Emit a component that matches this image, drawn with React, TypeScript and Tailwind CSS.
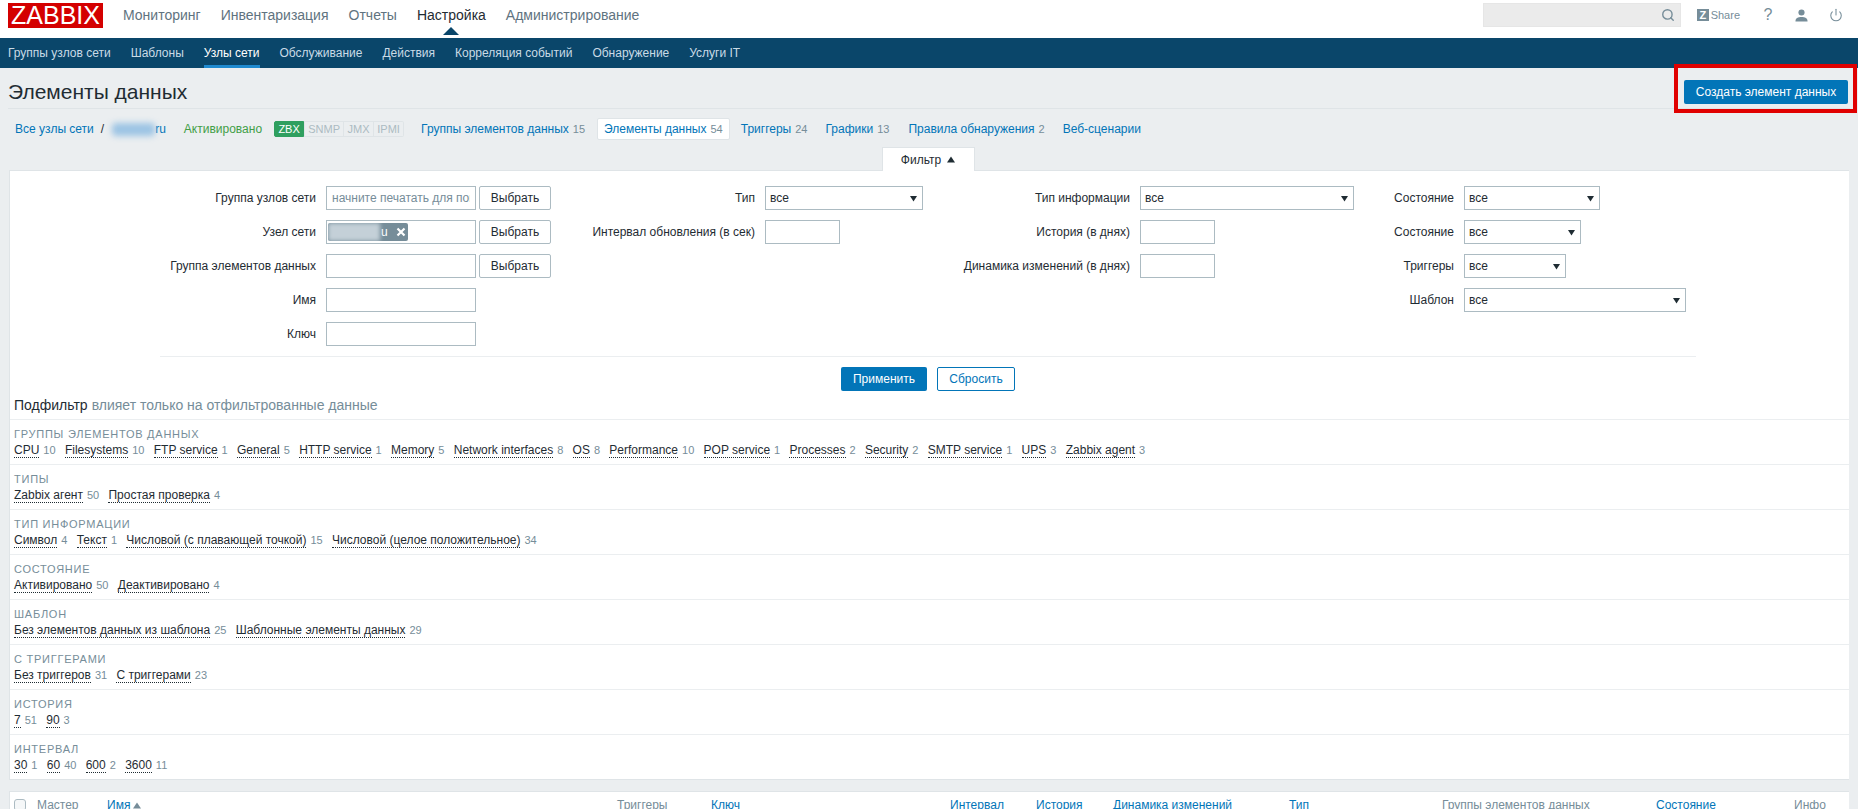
import React from "react";
import { Search, Power } from "lucide-react";

const sub: [string, [string, number][]][] = [
  ["Группы элементов данных", [["CPU", 10], ["Filesystems", 10], ["FTP service", 1], ["General", 5], ["HTTP service", 1], ["Memory", 5], ["Network interfaces", 8], ["OS", 8], ["Performance", 10], ["POP service", 1], ["Processes", 2], ["Security", 2], ["SMTP service", 1], ["UPS", 3], ["Zabbix agent", 3]]],
  ["Типы", [["Zabbix агент", 50], ["Простая проверка", 4]]],
  ["Тип информации", [["Символ", 4], ["Текст", 1], ["Числовой (с плавающей точкой)", 15], ["Числовой (целое положительное)", 34]]],
  ["Состояние", [["Активировано", 50], ["Деактивировано", 4]]],
  ["Шаблон", [["Без элементов данных из шаблона", 25], ["Шаблонные элементы данных", 29]]],
  ["С триггерами", [["Без триггеров", 31], ["С триггерами", 23]]],
  ["История", [["7", 51], ["90", 3]]],
  ["Интервал", [["30", 1], ["60", 40], ["600", 2], ["3600", 11]]],
];

function Arrow() {
  return (
    <svg width="7" height="7" viewBox="0 0 7 7" className="shrink-0">
      <path d="M0 1h7L3.5 6.5z" fill="#1f2c33" />
    </svg>
  );
}

function Select({ w }: { w: string }) {
  return (
    <div className={`${w} h-6 border border-[#acbbc2] bg-white flex items-center justify-between pl-[4px] pr-[5px] text-[#1f2c33]`}>
      <span>все</span>
      <Arrow />
    </div>
  );
}

function Input({ w, placeholder }: { w: string; placeholder?: string }) {
  return (
    <input
      readOnly
      placeholder={placeholder}
      className={`${w} h-6 border border-[#acbbc2] bg-white px-[5px] outline-none placeholder:text-[#768d99] text-xs`}
    />
  );
}

function Pick() {
  return (
    <button className="w-[72px] h-6 ml-[3px] border border-[#acbbc2] rounded-[2px] bg-white text-[#1f2c33] text-xs">Выбрать</button>
  );
}

function Row({ label, w, children }: { label?: string; w: string; children?: React.ReactNode }) {
  return (
    <div className="flex items-center h-6">
      <div className={`${w} shrink-0 text-right pr-[10px] text-[#1f2c33] whitespace-nowrap`}>{label}</div>
      {children}
    </div>
  );
}

function Tab({ text, n, active, className }: { text: string; n?: number; active?: boolean; className?: string }) {
  return (
    <div className={`h-[22px] flex items-center whitespace-nowrap px-[6px] rounded-[2px] ${active ? "bg-white border border-[#dfe4e7]" : ""} ${className ?? ""}`}>
      <span className="text-[#0275b8]">{text}</span>
      {n !== undefined && <span className="text-[#768d99] ml-[4px] text-[11px]">{n}</span>}
    </div>
  );
}

export default function App() {
  return (
    <div className="w-[1858px] h-[809px] overflow-hidden bg-[#ebeef0] text-xs font-['Liberation_Sans',Arial,sans-serif] relative">
      {/* top nav */}
      <div className="h-[38px] bg-white flex items-start pl-2 relative">
        <div className="mt-[3px] w-[95px] h-[25px] bg-[#d40000] text-white text-[25px] leading-[25px] text-center">ZABBIX</div>
        <nav className="flex gap-5 ml-5 h-[30px] items-center text-sm text-[#5f7380] whitespace-nowrap">
          <span>Мониторинг</span>
          <span>Инвентаризация</span>
          <span>Отчеты</span>
          <span className="text-[#1f2c33] relative">
            Настройка
            <span className="absolute left-1/2 -translate-x-1/2 top-[22px] w-0 h-0 border-x-[8px] border-x-transparent border-b-[8px] border-b-[#0a466a]" />
          </span>
          <span>Администрирование</span>
        </nav>
        <div className="ml-auto flex items-center h-[30px] text-[#768d99]">
          <div className="w-[198px] h-6 bg-[#ebebeb] border border-[#e6e6e6] flex items-center justify-end pr-[5px]">
            <Search size={14} strokeWidth={2.4} className="text-[#768d99]" />
          </div>
          <div className="flex items-center ml-4 w-[43px] text-[11px]">
            <span className="w-3 h-3 bg-[#768d99] text-white text-[11px] leading-3 font-bold text-center mr-[2px]">Z</span>
            Share
          </div>
          <span className="ml-[23px] w-[10px] text-[16px] text-center">?</span>
          <svg width="13" height="13" viewBox="0 0 14 14" className="ml-[22px]">
            <circle cx="7" cy="3.8" r="3.3" fill="#768d99" />
            <path d="M0.5 13.5c0-3.6 2.6-4.8 6.5-4.8s6.5 1.2 6.5 4.8z" fill="#768d99" />
          </svg>
          <Power size={14} strokeWidth={1.8} className="ml-[21px] mr-[15px]" />
        </div>
      </div>

      {/* sub nav */}
      <div className="h-[30px] bg-[#0a466a] flex gap-5 pl-2 items-stretch text-[#c9dbe6] whitespace-nowrap">
        <span className="flex items-center">Группы узлов сети</span>
        <span className="flex items-center">Шаблоны</span>
        <span className="flex items-center text-white border-b-[3px] border-[#1f8ad0] pt-[3px]">Узлы сети</span>
        <span className="flex items-center">Обслуживание</span>
        <span className="flex items-center">Действия</span>
        <span className="flex items-center">Корреляция событий</span>
        <span className="flex items-center">Обнаружение</span>
        <span className="flex items-center">Услуги IT</span>
      </div>

      {/* header */}
      <div className="mx-2 h-[41px] border-b border-[#dfe4e7] flex items-center justify-between">
        <h1 className="text-[21px] leading-6 text-[#1f2c33] mt-[7px]">Элементы данных</h1>
        <button className="w-[164px] h-6 mt-[8px] mr-[2px] bg-[#0275b8] rounded-[2px] text-white text-xs">Создать элемент данных</button>
      </div>

      {/* tabs */}
      <div className="flex items-center h-[22px] mt-[9px] pl-[9px] whitespace-nowrap">
        <Tab text="Все узлы сети" />
        <span className="text-[#1f2c33] ml-[1px]">/</span>
        <div className="ml-[8px] w-[43px] h-[13px] rounded-[4px] bg-[#9cc4e4] blur-[3px]" />
        <span className="text-[#0275b8] mr-[12px]">ru</span>
        <span className="text-[#429e47] mr-[11px] ml-[6px]">Активировано</span>
        <div className="flex h-4 text-[11px] leading-[14px] text-[#acbbc2] ml-[1px]">
          <span className="w-[30px] bg-[#2f9f5f] border border-[#2f9f5f] rounded-l-[2px] text-white text-center">ZBX</span>
          <span className="w-[40px] border border-[#dfe4e7] text-center">SNMP</span>
          <span className="w-[30px] border-y border-r border-[#dfe4e7] text-center">JMX</span>
          <span className="w-[30px] border-y border-r border-[#dfe4e7] rounded-r-[2px] text-center">IPMI</span>
        </div>
        <Tab text="Группы элементов данных" n={15} className="ml-[11px]" />
        <Tab text="Элементы данных" n={54} active className="ml-[6px]" />
        <Tab text="Триггеры" n={24} className="ml-[5px]" />
        <Tab text="Графики" n={13} className="ml-[6px]" />
        <Tab text="Правила обнаружения" n={2} className="ml-[7px]" />
        <Tab text="Веб-сценарии" className="ml-[6px]" />
      </div>

      {/* filter tab */}
      <div className="flex justify-center mt-[7px] ml-[-2px] h-6">
        <div className="w-[93px] bg-white border-x border-t border-[#dfe4e7] flex items-center justify-center gap-[6px] text-[#1f2c33] relative z-10 h-6">
          Фильтр
          <svg width="8" height="7" viewBox="0 0 8 7"><path d="M4 0.5L8 6.5H0z" fill="#1f2c33" /></svg>
        </div>
      </div>

      {/* filter panel */}
      <div className="mx-[9px] h-[610px] -mt-px bg-white border border-[#dfe4e7] border-r-0 w-[1840px]">
        <div className="flex pt-[15px] h-[185px]">
          <div className="flex flex-col gap-[10px] w-[550px]">
            <Row label="Группа узлов сети" w="w-[316px]"><Input w="w-[150px]" placeholder="начните печатать для поиска" /><Pick /></Row>
            <Row label="Узел сети" w="w-[316px]">
              <div className="w-[150px] h-6 border border-[#acbbc2] flex items-center pl-[1px]">
                <div className="w-[80px] h-[18px] bg-[#768d99] rounded-[2px] flex items-center text-white overflow-hidden">
                  <div className="w-[52px] h-[18px] bg-[#c4d0d8] blur-[2px] shrink-0" />
                  <span className="ml-[1px]">u</span>
                  <svg width="10" height="10" viewBox="0 0 10 10" className="ml-[8px]"><path d="M1.5 1.5l7 7M8.5 1.5l-7 7" stroke="#fff" strokeWidth="2.2" /></svg>
                </div>
              </div>
              <Pick />
            </Row>
            <Row label="Группа элементов данных" w="w-[316px]"><Input w="w-[150px]" /><Pick /></Row>
            <Row label="Имя" w="w-[316px]"><Input w="w-[150px]" /></Row>
            <Row label="Ключ" w="w-[316px]"><Input w="w-[150px]" /></Row>
          </div>
          <div className="flex flex-col gap-[10px] w-[376px]">
            <Row label="Тип" w="w-[205px]"><Select w="w-[158px]" /></Row>
            <Row label="Интервал обновления (в сек)" w="w-[205px]"><Input w="w-[75px]" /></Row>
          </div>
          <div className="flex flex-col gap-[10px] w-[419px]">
            <Row label="Тип информации" w="w-[204px]"><Select w="w-[214px]" /></Row>
            <Row label="История (в днях)" w="w-[204px]"><Input w="w-[75px]" /></Row>
            <Row label="Динамика изменений (в днях)" w="w-[204px]"><Input w="w-[75px]" /></Row>
          </div>
          <div className="flex flex-col gap-[10px]">
            <Row label="Состояние" w="w-[109px]"><Select w="w-[136px]" /></Row>
            <Row label="Состояние" w="w-[109px]"><Select w="w-[117px]" /></Row>
            <Row label="Триггеры" w="w-[109px]"><Select w="w-[102px]" /></Row>
            <Row label="Шаблон" w="w-[109px]"><Select w="w-[222px]" /></Row>
          </div>
        </div>
        <div className="ml-[150px] w-[1536px] border-t border-[#ebeef0] flex justify-center gap-[10px] pt-[10px]">
          <button className="w-[86px] h-6 bg-[#0275b8] rounded-[2px] text-white text-xs">Применить</button>
          <button className="w-[78px] h-6 bg-white border border-[#0275b8] rounded-[2px] text-[#0275b8] text-xs">Сбросить</button>
        </div>
        <div className="h-[28px] pl-[4px] flex items-center text-sm whitespace-nowrap">
          <span className="text-[#1f2c33]">Подфильтр</span>
          <span className="text-[#768d99] ml-[4px]">влияет только на отфильтрованные данные</span>
        </div>
        {sub.map(([title, items]) => (
          <div key={title} className="h-[45px] border-t border-[#ebeef0] pl-[4px] pt-[7px]">
            <div className="text-[11px] leading-[14px] uppercase tracking-[0.75px] text-[#768d99]">{title}</div>
            <div className="flex gap-[9.3px] mt-[2px] whitespace-nowrap">
              {items.map(([name, n]) => (
                <div key={name} className="flex items-start">
                  <span className="text-[#1f2c33] leading-[14px] border-b border-dotted border-[#1f2c33]">{name}</span>
                  <span className="text-[#768d99] text-[11px] leading-[14px] ml-[4px]">{n}</span>
                </div>
              ))}
            </div>
          </div>
        ))}
      </div>

      {/* table */}
      <div className="mt-[11px] mx-[9px] w-[1840px] h-[40px] bg-white border border-[#dfe4e7] border-r-0 pt-[6px] pl-[4px] whitespace-nowrap">
        <div className="grid grid-cols-[23px_70px_510px_94px_239px_86px_77px_176px_153px_214px_138px_60px] items-center text-[#0275b8] leading-[14px]">
          <div className="w-3 h-3 border border-[#acbbc2] rounded-[3px] bg-[#f5f7f8]" />
          <span className="text-[#768d99]">Мастер</span>
          <span className="flex items-center gap-[3px]">Имя<svg width="8" height="7" viewBox="0 0 8 7"><path d="M4 0.5L8 6.5H0z" fill="#768d99" /></svg></span>
          <span className="text-[#768d99]">Триггеры</span>
          <span>Ключ</span>
          <span>Интервал</span>
          <span>История</span>
          <span>Динамика изменений</span>
          <span>Тип</span>
          <span className="text-[#768d99]">Группы элементов данных</span>
          <span>Состояние</span>
          <span className="text-[#768d99]">Инфо</span>
        </div>
      </div>

      {/* highlight box drawn over the screenshot */}
      <div className="absolute left-[1674px] top-[64px] w-[183px] h-[49px] border-4 border-[#e00000] pointer-events-none" />
    </div>
  );
}
